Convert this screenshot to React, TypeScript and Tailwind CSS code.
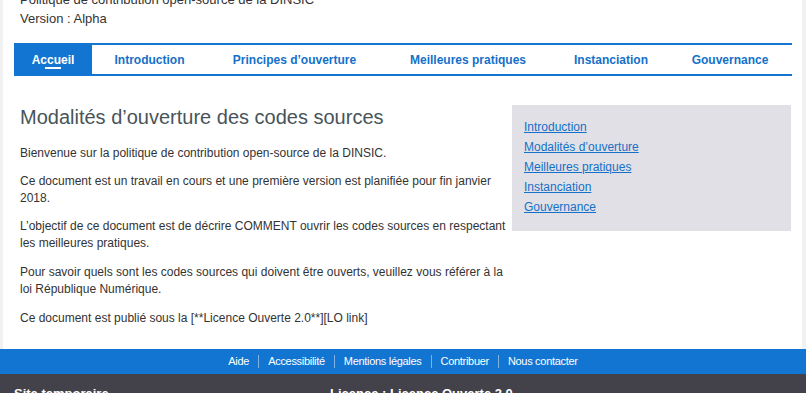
const navItems = [
  { label: 'Accueil', width: 'w-[78px]', active: true },
  { label: 'Introduction', width: 'w-[115px]' },
  { label: 'Principes d’ouverture', width: 'w-[175px]' },
  { label: 'Meilleures pratiques', width: 'w-[172px]' },
  { label: 'Instanciation', width: 'w-[114px]' },
  { label: 'Gouvernance', width: 'w-[124px]' },
];

const sideLinks = ['Introduction', 'Modalités d’ouverture', 'Meilleures pratiques', 'Instanciation', 'Gouvernance'];

const footerLinks = ['Aide', 'Accessibilité', 'Mentions légales', 'Contribuer', 'Nous contacter'];

export default function App() {
  return (
    <div className="w-[806px] h-[393px] overflow-hidden bg-white font-['Liberation_Sans',Arial,sans-serif]">
      <div className="flex flex-col border-l-[3px] border-r-[4px] border-[#f1f1f3] h-[349px]">
        <header className="px-[17px] -mt-[10px] text-[13px] leading-[19px] text-[#333]">
          <div>Politique de contribution open-source de la DINSIC</div>
          <div>Version : Alpha</div>
        </header>

        <nav className="mt-[15px] ml-[11px] w-[778px] flex border-y-2 border-[#1275d2] h-[33px]">
          {navItems.map((item) => (
            <div
              key={item.label}
              className={`${item.width} shrink-0 relative -my-[2px] flex items-center justify-center text-[12px] font-bold ${
                item.active ? 'bg-[#1275d2] text-white' : 'text-[#1470c8]'
              }`}
            >
              {item.label}
              {item.active && <span className="absolute left-1/2 -translate-x-1/2 bottom-[7px] w-[16px] h-[2px] bg-white" />}
            </div>
          ))}
        </nav>

        <div className="flex mt-[29px] pl-[17px] pr-[11px]">
          <main className="w-[488px] shrink-0 text-[12px] leading-[17px] text-[#333]">
            <h1 className="text-[20px] leading-[24px] text-[#48545a] mb-[16px]">Modalités d’ouverture des codes sources</h1>
            <p className="mb-[11px]">Bienvenue sur la politique de contribution open-source de la DINSIC.</p>
            <p className="mb-[11px]">Ce document est un travail en cours et une première version est planifiée pour fin janvier 2018.</p>
            <p className="mb-[12px]">L’objectif de ce document est de décrire COMMENT ouvrir les codes sources en respectant les meilleures pratiques.</p>
            <p className="mb-[12px]">Pour savoir quels sont les codes sources qui doivent être ouverts, veuillez vous référer à la loi République Numérique.</p>
            <p>Ce document est publié sous la [**Licence Ouverte 2.0**][LO link]</p>
          </main>
          <aside className="ml-auto w-[279px] h-[126px] bg-[#e1e0e6] pt-[14px] px-[12px] flex flex-col gap-[3px]">
            {sideLinks.map((l) => (
              <a key={l} href="#" className="text-[12px] leading-[17px] text-[#1470c8] underline">
                {l}
              </a>
            ))}
          </aside>
        </div>
      </div>

      <footer>
        <div className="h-[25px] bg-[#1275d2] flex items-center justify-center text-[11px] text-white">
          {footerLinks.map((l, i) => (
            <div key={l} className="flex items-center">
              {i > 0 && <span className="w-px h-[13px] bg-[#7fb3e6] mx-[9px]" />}
              <span className="tracking-[-0.3px]">{l}</span>
            </div>
          ))}
        </div>
        <div className="bg-[#434149] h-[40px] flex text-[13px] font-bold text-white pt-[10px]">
          <div className="pl-[14px] w-[330px]">Site temporaire</div>
          <div>Licence : Licence Ouverte 2.0</div>
        </div>
      </footer>
    </div>
  );
}
